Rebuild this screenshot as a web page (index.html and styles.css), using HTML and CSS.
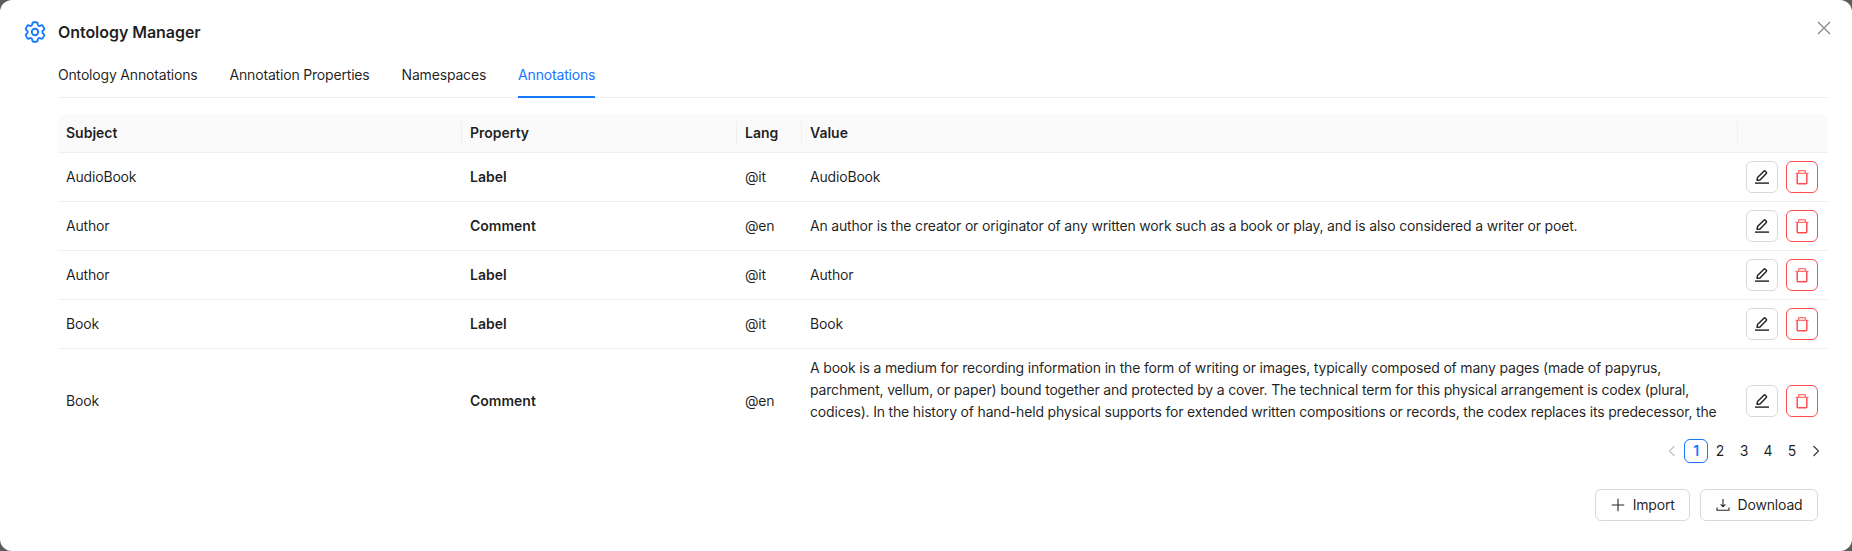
FILE: index.html
```html
<!DOCTYPE html>
<html lang="en">
<head>
<meta charset="utf-8">
<title>Ontology Manager</title>
<link rel="stylesheet" href="styles.css">
</head>
<body>
<div class="modal">
  <button class="close" aria-label="Close">
    <svg viewBox="0 0 14 14" width="14" height="14"><path d="M1 1l12 12M13 1L1 13"/></svg>
  </button>
  <header class="head">
    <svg class="gear" viewBox="0 0 24 24" width="26" height="26"><path d="M9.594 3.94c.09-.542.56-.94 1.11-.94h2.593c.55 0 1.02.398 1.11.94l.213 1.281c.063.374.313.686.645.87.074.04.147.083.22.127.325.196.72.257 1.075.124l1.217-.456a1.125 1.125 0 0 1 1.37.49l1.296 2.247a1.125 1.125 0 0 1-.26 1.431l-1.003.827c-.293.241-.438.613-.43.992a7.723 7.723 0 0 1 0 .255c-.008.378.137.75.43.991l1.004.827c.424.35.534.955.26 1.43l-1.298 2.247a1.125 1.125 0 0 1-1.369.491l-1.217-.456c-.355-.133-.75-.072-1.076.124a6.47 6.47 0 0 1-.22.128c-.331.183-.581.495-.644.869l-.213 1.281c-.09.543-.56.94-1.11.94h-2.594c-.55 0-1.019-.398-1.11-.94l-.213-1.281c-.062-.374-.312-.686-.644-.87a6.52 6.52 0 0 1-.22-.127c-.325-.196-.72-.257-1.076-.124l-1.217.456a1.125 1.125 0 0 1-1.369-.49l-1.297-2.247a1.125 1.125 0 0 1 .26-1.431l1.004-.827c.292-.24.437-.613.43-.991a6.932 6.932 0 0 1 0-.255c.007-.38-.138-.751-.43-.992l-1.004-.827a1.125 1.125 0 0 1-.26-1.43l1.297-2.247a1.125 1.125 0 0 1 1.37-.491l1.216.456c.356.133.751.072 1.076-.124.072-.044.146-.086.22-.128.332-.183.582-.495.644-.869l.214-1.28Z"/><path d="M15 12a3 3 0 1 1-6 0 3 3 0 0 1 6 0Z"/></svg>
    <h1 class="title">Ontology Manager</h1>
  </header>
  <div class="body">
    <nav class="tabs">
      <a class="tab">Ontology Annotations</a>
      <a class="tab">Annotation Properties</a>
      <a class="tab">Namespaces</a>
      <a class="tab active">Annotations</a>
    </nav>
    <div class="scroller">
      <table class="grid">
        <colgroup>
          <col class="c-subject"><col class="c-prop"><col class="c-lang"><col class="c-value"><col class="c-act">
        </colgroup>
        <thead>
          <tr><th>Subject</th><th>Property</th><th>Lang</th><th>Value</th><th></th></tr>
        </thead>
        <tbody>
          <tr>
            <td>AudioBook</td><td class="strong">Label</td><td>@it</td><td>AudioBook</td>
            <td class="acts"><div class="act-row">
              <button class="icon-btn"><svg viewBox="0 0 16 16" width="16" height="16"><path class="pen" d="M3 11.3l.5-2.7L9.9 2.2a1 1 0 0 1 1.4 0l1 1a1 1 0 0 1 0 1.4L6 11l-3 .3z"/><path class="pen" d="M1 14.1h14"/></svg></button>
              <button class="icon-btn danger"><svg viewBox="0 0 16 16" width="16" height="16"><path class="bin-lid" d="M1.5 4.4h13M4.6 4V2.4a.8.8 0 0 1 .8-.8h5.2a.8.8 0 0 1 .8.8V4"/><path class="bin" d="M3.2 4.6v9.2a1 1 0 0 0 1 1h7.6a1 1 0 0 0 1-1V4.6"/></svg></button>
            </div></td>
          </tr>
          <tr>
            <td>Author</td><td class="strong">Comment</td><td>@en</td><td>An author is the creator or originator of any written work such as a book or play, and is also considered a writer or poet.</td>
            <td class="acts"><div class="act-row">
              <button class="icon-btn"><svg viewBox="0 0 16 16" width="16" height="16"><path class="pen" d="M3 11.3l.5-2.7L9.9 2.2a1 1 0 0 1 1.4 0l1 1a1 1 0 0 1 0 1.4L6 11l-3 .3z"/><path class="pen" d="M1 14.1h14"/></svg></button>
              <button class="icon-btn danger"><svg viewBox="0 0 16 16" width="16" height="16"><path class="bin-lid" d="M1.5 4.4h13M4.6 4V2.4a.8.8 0 0 1 .8-.8h5.2a.8.8 0 0 1 .8.8V4"/><path class="bin" d="M3.2 4.6v9.2a1 1 0 0 0 1 1h7.6a1 1 0 0 0 1-1V4.6"/></svg></button>
            </div></td>
          </tr>
          <tr>
            <td>Author</td><td class="strong">Label</td><td>@it</td><td>Author</td>
            <td class="acts"><div class="act-row">
              <button class="icon-btn"><svg viewBox="0 0 16 16" width="16" height="16"><path class="pen" d="M3 11.3l.5-2.7L9.9 2.2a1 1 0 0 1 1.4 0l1 1a1 1 0 0 1 0 1.4L6 11l-3 .3z"/><path class="pen" d="M1 14.1h14"/></svg></button>
              <button class="icon-btn danger"><svg viewBox="0 0 16 16" width="16" height="16"><path class="bin-lid" d="M1.5 4.4h13M4.6 4V2.4a.8.8 0 0 1 .8-.8h5.2a.8.8 0 0 1 .8.8V4"/><path class="bin" d="M3.2 4.6v9.2a1 1 0 0 0 1 1h7.6a1 1 0 0 0 1-1V4.6"/></svg></button>
            </div></td>
          </tr>
          <tr>
            <td>Book</td><td class="strong">Label</td><td>@it</td><td>Book</td>
            <td class="acts"><div class="act-row">
              <button class="icon-btn"><svg viewBox="0 0 16 16" width="16" height="16"><path class="pen" d="M3 11.3l.5-2.7L9.9 2.2a1 1 0 0 1 1.4 0l1 1a1 1 0 0 1 0 1.4L6 11l-3 .3z"/><path class="pen" d="M1 14.1h14"/></svg></button>
              <button class="icon-btn danger"><svg viewBox="0 0 16 16" width="16" height="16"><path class="bin-lid" d="M1.5 4.4h13M4.6 4V2.4a.8.8 0 0 1 .8-.8h5.2a.8.8 0 0 1 .8.8V4"/><path class="bin" d="M3.2 4.6v9.2a1 1 0 0 0 1 1h7.6a1 1 0 0 0 1-1V4.6"/></svg></button>
            </div></td>
          </tr>
          <tr>
            <td>Book</td><td class="strong">Comment</td><td>@en</td><td>A book is a medium for recording information in the form of writing or images, typically composed of many pages (made of papyrus, parchment, vellum, or paper) bound together and protected by a cover. The technical term for this physical arrangement is codex (plural, codices). In the history of hand-held physical supports for extended written compositions or records, the codex replaces its predecessor, the scroll.</td>
            <td class="acts"><div class="act-row">
              <button class="icon-btn"><svg viewBox="0 0 16 16" width="16" height="16"><path class="pen" d="M3 11.3l.5-2.7L9.9 2.2a1 1 0 0 1 1.4 0l1 1a1 1 0 0 1 0 1.4L6 11l-3 .3z"/><path class="pen" d="M1 14.1h14"/></svg></button>
              <button class="icon-btn danger"><svg viewBox="0 0 16 16" width="16" height="16"><path class="bin-lid" d="M1.5 4.4h13M4.6 4V2.4a.8.8 0 0 1 .8-.8h5.2a.8.8 0 0 1 .8.8V4"/><path class="bin" d="M3.2 4.6v9.2a1 1 0 0 0 1 1h7.6a1 1 0 0 0 1-1V4.6"/></svg></button>
            </div></td>
          </tr>
        </tbody>
      </table>
    </div>
    <div class="pager">
      <span class="pg arrow off"><svg viewBox="0 0 10 12" width="10" height="12"><path d="M7.5 1L2.5 6l5 5"/></svg></span>
      <span class="pg current">1</span>
      <span class="pg">2</span>
      <span class="pg">3</span>
      <span class="pg">4</span>
      <span class="pg">5</span>
      <span class="pg arrow"><svg viewBox="0 0 10 12" width="10" height="12"><path d="M2.5 1l5 5-5 5"/></svg></span>
    </div>
  </div>
  <footer class="foot">
    <button class="btn"><svg viewBox="0 0 14 14" width="14" height="14"><path d="M7 .8v12.4M.8 7h12.4"/></svg>Import</button>
    <button class="btn"><svg viewBox="0 0 14 14" width="14" height="14"><path d="M7 1v7.6M4.6 6.4L7 8.8l2.4-2.4M1 9.6v2.6h12V9.6"/></svg>Download</button>
  </footer>
</div>
</body>
</html>
```
FILE: styles.css
```css
* { box-sizing: border-box; }
html, body { margin: 0; height: 100%; }
body {
  background: #5c5c5c;
  font-family: Inter, "Liberation Sans", sans-serif;
  font-size: 14px;
  line-height: 22px;
  letter-spacing: -0.18px;
  color: rgba(0, 0, 0, 0.88);
  overflow: hidden;
}
.modal {
  position: relative;
  height: 551px;
  background: #fff;
  border-radius: 12px;
  padding-top: 20px;
}
.close {
  position: absolute;
  top: 21px;
  right: 21px;
  width: 14px;
  height: 14px;
  padding: 0;
  border: 0;
  background: none;
  display: flex;
}
.close path { fill: none; stroke: #8a8a8a; stroke-width: 1.3; }
.head {
  display: flex;
  align-items: center;
  height: 24px;
  padding-left: 22px;
  gap: 10px;
}
.gear { fill: none; stroke: #1677ff; stroke-width: 1.7; stroke-linejoin: round; }
.title { margin: 0; font-size: 16px; line-height: 24px; font-weight: 600; letter-spacing: -0.05px; }
.body { padding: 8px 24px 0 58px; }
.tabs {
  display: flex;
  gap: 32px;
  border-bottom: 1px solid #f0f0f0;
  height: 46px;
}
.tab { padding: 12px 0; height: 46px; }
.tab.active { color: #1677ff; border-bottom: 2px solid #1677ff; }
.scroller { margin-top: 16px; height: 309px; overflow: hidden; }
.grid { width: 100%; table-layout: fixed; border-collapse: separate; border-spacing: 0; }
.c-subject { width: 404px; }
.c-prop { width: 275px; }
.c-lang { width: 65px; }
.c-act { width: 90px; }
.grid th {
  position: relative;
  padding: 8px;
  background: #fafafa;
  text-align: left;
  font-weight: 600;
  letter-spacing: 0;
  border-bottom: 1px solid #f0f0f0;
}
.grid th:first-child { border-top-left-radius: 8px; }
.grid th:last-child { border-top-right-radius: 8px; }
.grid th:not(:first-child)::before {
  content: "";
  position: absolute;
  left: -1px;
  top: 8px;
  width: 1px;
  height: 22px;
  background: #f0f0f0;
}
.grid td {
  padding: 8px;
  border-bottom: 1px solid #f0f0f0;
  vertical-align: middle;
}
.grid td.strong { font-weight: 600; letter-spacing: 0; }
.grid td.acts { padding-right: 10px; }
.act-row { display: flex; justify-content: flex-end; gap: 8px; }
.icon-btn {
  width: 32px;
  height: 32px;
  padding: 0;
  display: flex;
  align-items: center;
  justify-content: center;
  background: #fff;
  border: 1px solid #d9d9d9;
  border-radius: 6px;
}
.icon-btn.danger { border-color: #ff4d4f; }
.pen { fill: none; stroke: #1f1f1f; stroke-width: 1.4; stroke-linejoin: round; }
.bin-lid { fill: none; stroke: #ff7375; stroke-width: 1.4; }
.bin { fill: none; stroke: #ff4d4f; stroke-width: 1.5; }
.pager { display: flex; justify-content: flex-end; margin-top: 16px; }
.pg {
  width: 24px;
  height: 24px;
  display: flex;
  align-items: center;
  justify-content: center;
  line-height: 22px;
  border-radius: 6px;
  border: 1px solid transparent;
}
.pg.current { border-color: #1677ff; color: #1677ff; font-weight: 600; }
.arrow path { fill: none; stroke: #333; stroke-width: 1.1; }
.arrow.off path { stroke: #bfbfbf; }
.foot {
  display: flex;
  justify-content: flex-end;
  gap: 10px;
  margin-top: 26px;
  padding-right: 34px;
}
.btn {
  height: 32px;
  padding: 0 14.5px;
  display: flex;
  align-items: center;
  gap: 8px;
  font: inherit;
  letter-spacing: inherit;
  color: inherit;
  background: #fff;
  border: 1px solid #d9d9d9;
  border-radius: 6px;
}
.btn path { fill: none; stroke: #262626; stroke-width: 1.1; }
```
